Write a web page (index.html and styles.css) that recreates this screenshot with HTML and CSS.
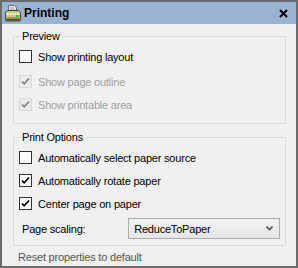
FILE: index.html
```html
<!DOCTYPE html>
<html lang="en">
  <head>
    <meta charset="UTF-8" />
    <title>Printing</title>
    <link rel="stylesheet" href="styles.css">
  </head>
  <body>
    <div class="window">
      <header class="titlebar">
        <svg class="app-icon" viewBox="0 0 16 17" width="16" height="17">
          <path d="M3.5 0.5h6l2 2v5h-8z" fill="#e8e8e8" stroke="#707070" />
          <path d="M5 3h4M5 5h5" stroke="#a0a0a0" />
          <path d="M0.5 7.5l2-2h11l2 2v7h-15z" fill="#c9c98a" stroke="#3d3d2a" />
          <path d="M1 8h14v2H1z" fill="#e6e6b8" />
          <rect x="2" y="12" width="12" height="2" fill="#9a9a52" />
          <rect x="11" y="10" width="3" height="2" fill="#2ecc2e" />
          <path d="M0.5 14.5h15v2h-15z" fill="#5a5a3a" />
        </svg>
        <h1>Printing</h1>
        <svg class="close" viewBox="0 0 9 9" width="9" height="9">
          <path d="M1 1l7 7M8 1l-7 7" stroke="#000" stroke-width="2" />
        </svg>
      </header>
      <main class="content">
        <section class="group preview">
          <span class="group-title">Preview</span>
          <label class="row"><span class="check"></span>Show printing layout</label>
          <label class="row disabled"><span class="check on"></span>Show page outline</label>
          <label class="row disabled"><span class="check on"></span>Show printable area</label>
        </section>
        <section class="group options">
          <span class="group-title">Print Options</span>
          <label class="row"><span class="check"></span>Automatically select paper source</label>
          <label class="row"><span class="check on"></span>Automatically rotate paper</label>
          <label class="row"><span class="check on"></span>Center page on paper</label>
          <div class="field">
            <span class="field-label">Page scaling:</span>
            <div class="select">
              <span>ReduceToPaper</span>
              <svg viewBox="0 0 7 5" width="7" height="5">
                <path d="M0.5 0.5l3 3l3-3" fill="none" stroke="#555" stroke-width="1.6" />
              </svg>
            </div>
          </div>
        </section>
        <a class="reset">Reset properties to default</a>
      </main>
    </div>
  </body>
</html>
```

FILE: styles.css
```css
:root {
  --frame: #6b6b6b;
  --caption: #99b4d1;
  --panel: #f0f0f0;
  --group-border: #dcdcdc;
}

* {
  box-sizing: border-box;
}

body {
  margin: 0;
  font-family: "Liberation Sans", Arial, sans-serif;
  font-size: 11px;
  letter-spacing: -0.2px;
  color: #000;
}

.window {
  display: flex;
  flex-direction: column;
  width: 298px;
  height: 268px;
  border: 2px solid var(--frame);
  background: var(--panel);
}

.titlebar {
  display: flex;
  align-items: center;
  height: 22px;
  padding: 0 8px 0 3px;
  background: var(--caption);
}

.app-icon {
  margin-right: 3px;
}

.titlebar h1 {
  flex: 1;
  margin: 0;
  font-size: 12px;
  font-weight: bold;
  letter-spacing: 0;
}

.close {
  margin-top: 1px;
}

.content {
  padding: 12px 10px 0 11px;
}

.group {
  position: relative;
  border: 1px solid var(--group-border);
  padding: 13px 5px 0;
}

.group-title {
  position: absolute;
  top: -8px;
  left: 6px;
  padding: 0 2px 0 2px;
  background: var(--panel);
  line-height: 14px;
}

.preview {
  height: 88px;
}

.options {
  height: 109px;
  margin-top: 13px;
}

.row {
  display: flex;
  align-items: center;
  height: 13px;
  margin-bottom: 10px;
}

.preview .row:nth-of-type(2) {
  margin-top: 12px;
}

.row.disabled {
  color: #a0a0a0;
}

.check {
  width: 13px;
  height: 13px;
  margin-right: 6px;
  border: 1px solid #333;
  background: #fff;
}

.check.on {
  background: #fff url("data:image/svg+xml,%3Csvg xmlns='http://www.w3.org/2000/svg' viewBox='0 0 11 11'%3E%3Cpath d='M2 5.5l2.2 2.3L9 2.5' fill='none' stroke='%23000' stroke-width='1.8'/%3E%3C/svg%3E") center / 11px 11px no-repeat;
}

.disabled .check {
  border-color: #bcbcbc;
  background-color: #e6e6e6;
  opacity: .45;
}

.field {
  display: flex;
  align-items: center;
  margin-top: -2px;
}

.field-label {
  width: 110px;
  padding-left: 3px;
}

.select {
  display: flex;
  align-items: center;
  justify-content: space-between;
  width: 153px;
  height: 21px;
  padding: 0 6px 0 5px;
  border: 1px solid #acacac;
  background: linear-gradient(#f2f2f2, #e5e5e5);
}

.reset {
  display: block;
  margin-top: 5px;
  padding-left: 5px;
  color: #555;
}
```
